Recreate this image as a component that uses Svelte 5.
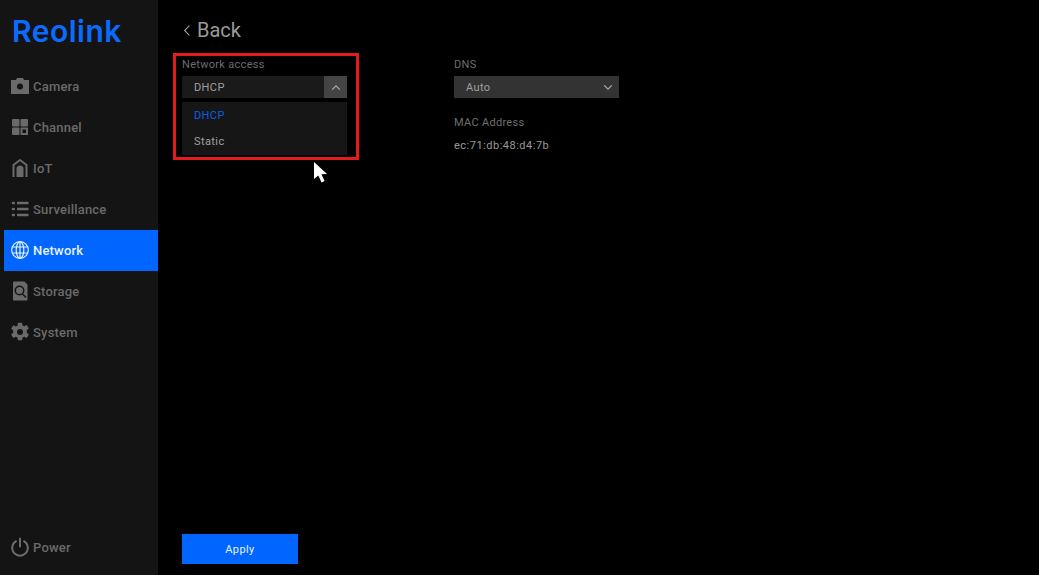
<script>
  const items = [
    { id: "camera", label: "Camera" },
    { id: "channel", label: "Channel" },
    { id: "iot", label: "IoT" },
    { id: "surveillance", label: "Surveillance" },
    { id: "network", label: "Network" },
    { id: "storage", label: "Storage" },
    { id: "system", label: "System" }
  ];
  const active = "network";
</script>

{#snippet icon(id)}
  <svg class="icon" viewBox="0 0 20 20" width="20" height="20">
    {#if id === "camera"}
      <path fill="currentColor" fill-rule="evenodd" d="M1 4h5l1-2h6l1 2h5v14H1zM10 7.500a3 3 0 1 0 0 6 3 3 0 0 0 0-6z" />
    {:else if id === "channel"}
      <rect x="2" y="2" width="7.500" height="7.500" rx="1" fill="currentColor" />
      <rect x="10.500" y="2" width="7.500" height="7.500" rx="1" fill="currentColor" />
      <rect x="2" y="10.500" width="7.500" height="7.500" rx="1" fill="currentColor" />
      <rect x="11.500" y="11.500" width="5.500" height="5.500" fill="none" stroke="currentColor" stroke-width="2" />
    {:else if id === "iot"}
      <path fill="none" stroke="currentColor" stroke-width="2" stroke-linejoin="round" d="M3.500 19V7L10 2l6.500 5v12" />
      <path fill="currentColor" d="M6.500 19v-8a3.500 3.500 0 0 1 7 0v8z" />
    {:else if id === "surveillance"}
      <path fill="none" stroke="currentColor" stroke-width="2.600" d="M7 4h11.500M7 10h11.500M7 16h11.500" />
      <path fill="none" stroke="currentColor" stroke-width="2.600" stroke-linecap="round" d="M3 4h.8M3 10h.8M3 16h.8" />
    {:else if id === "network"}
      <circle cx="10" cy="10" r="8.300" fill="none" stroke="currentColor" stroke-width="1.200" />
      <ellipse cx="10" cy="10" rx="3.800" ry="8.300" fill="none" stroke="currentColor" stroke-width="1.200" />
      <path fill="none" stroke="currentColor" stroke-width="1.200" d="M10 1.700v16.600M2.200 7h15.600M2.200 13h15.600" />
    {:else if id === "storage"}
      <path fill="currentColor" fill-rule="evenodd" d="M4 .5h10.500l3 3V18.500a1 1 0 0 1-1 1H4a1 1 0 0 1-1-1V1.500a1 1 0 0 1 1-1zM9.500 4.500a5 5 0 1 0 0 10 5 5 0 0 0 0-10zM9.500 6a3.500 3.500 0 1 1 0 7 3.500 3.500 0 0 1 0-7z" />
      <path fill="none" stroke="#141414" stroke-width="1.400" d="M12.500 13l3.500 3.500" />
    {:else if id === "system"}
      <path fill="currentColor" fill-rule="evenodd" d="M8 .8h4l.6 2.700 1.700.8 2.500-1.200 2 3.400-2 1.800v2.400l2 1.800-2 3.400-2.500-1.200-1.700.8-.6 2.700H8l-.6-2.700-1.700-.8-2.500 1.200-2-3.400 2-1.800V8.500l-2-1.800 2-3.400 2.500 1.200 1.700-.8zM10 7a3 3 0 1 0 0 6 3 3 0 0 0 0-6z" />
    {:else if id === "power"}
      <path fill="none" stroke="currentColor" stroke-width="2" stroke-linecap="round" d="M6 4.200a7.800 7.800 0 1 0 8 0M10 1.500v8" />
    {/if}
  </svg>
{/snippet}

<div class="page">
  <aside class="sidebar">
    <div class="logo">Reolink</div>
    <nav>
      {#each items as item}
        <div class="item" class:active={item.id === active}>
          {@render icon(item.id)}
          <span>{item.label}</span>
        </div>
      {/each}
    </nav>
    <div class="item power">
      {@render icon("power")}
      <span>Power</span>
    </div>
  </aside>

  <main>
    <div class="back">
      <svg viewBox="0 0 10 16" width="8" height="13"><path d="M8 2L2 8l6 6" fill="none" stroke="currentColor" stroke-width="1.400" /></svg>
      <span>Back</span>
    </div>

    <div class="columns">
      <div class="col access">
        <div class="label">Network access</div>
        <div class="select">
          <span class="value">DHCP</span>
          <span class="toggle">
            <svg viewBox="0 0 12 8" width="10" height="7"><path d="M1.500 6.500L6 2l4.500 4.500" fill="none" stroke="currentColor" stroke-width="1.500" /></svg>
          </span>
        </div>
        <ul class="menu">
          <li class="selected">DHCP</li>
          <li>Static</li>
        </ul>
        <div class="highlight"></div>
      </div>

      <div class="col dns">
        <div class="label">DNS</div>
        <div class="select light">
          <span class="value">Auto</span>
          <svg class="chev" viewBox="0 0 12 8" width="10" height="7"><path d="M1.500 1.500L6 6l4.500-4.500" fill="none" stroke="currentColor" stroke-width="1.500" /></svg>
        </div>
        <div class="label mac">MAC Address</div>
        <div class="mac-value">ec:71:db:48:d4:7b</div>
      </div>
    </div>

    <button class="apply">Apply</button>

    <svg class="cursor" viewBox="0 0 16 24" width="16" height="24">
      <path d="M1 1v17l4.300-3.600 3.300 7.100 3-1.400-3.200-6.800 5.600-.4z" fill="#fff" />
    </svg>
  </main>
</div>

<style>
  :global(body) {
    background: #000;
  }
  .page {
    display: flex;
    width: 1039px;
    height: 575px;
    overflow: hidden;
    background: #000;
    font-family: Roboto, "Liberation Sans", sans-serif;
  }
  .sidebar {
    display: flex;
    flex-direction: column;
    flex: none;
    width: 158px;
    background: #141414;
  }
  .logo {
    height: 66px;
    padding: 14px 0 0 12px;
    box-sizing: border-box;
    color: #0a6cff;
    font-family: Inter, sans-serif;
    font-size: 30px;
    line-height: 34px;
    font-weight: 600;
    letter-spacing: 0.5px;
  }
  .item {
    display: flex;
    align-items: center;
    gap: 3px;
    height: 41px;
    box-sizing: border-box;
    margin-left: 4px;
    padding: 0 0 1px 6px;
    color: #6a6a6a;
    font-size: 13px;
    font-weight: 500;
    letter-spacing: 0.2px;
  }
  .item.active {
    background: #0066ff;
    color: #e8f1ff;
  }
  .icon {
    flex: none;
  }
  .power {
    margin-top: auto;
    margin-bottom: 7px;
  }
  main {
    position: relative;
    flex: 1;
    padding: 0 0 11px 24px;
    display: flex;
    flex-direction: column;
    align-items: flex-start;
  }
  .back {
    display: flex;
    align-items: center;
    gap: 6px;
    height: 60px;
    margin-bottom: -3px;
    color: #9a9a9a;
    font-size: 20px;
    padding-left: 1px;
    box-sizing: border-box;
  }
  .columns {
    display: flex;
    flex: 1;
  }
  .col {
    position: relative;
    width: 165px;
  }
  .access {
    margin-right: 107px;
  }
  .label {
    height: 19px;
    color: #6e6e6e;
    font-size: 11px;
    line-height: 16px;
    letter-spacing: 0.3px;
  }
  .select {
    display: flex;
    align-items: center;
    justify-content: space-between;
    height: 22px;
    background: #1a1a1a;
    color: #a0a0a0;
    font-size: 11px;
    letter-spacing: 0.4px;
  }
  .select.light {
    background: #333;
  }
  .value {
    padding-left: 12px;
  }
  .toggle {
    display: flex;
    align-items: center;
    justify-content: center;
    width: 23px;
    height: 22px;
    background: #444;
    color: #aaa;
  }
  .chev {
    margin-right: 6px;
    color: #aaa;
  }
  .menu {
    position: absolute;
    top: 45px;
    left: 0;
    right: 0;
    margin: 0;
    padding: 1px 0 0;
    box-sizing: border-box;
    height: 53px;
    list-style: none;
    background: #161616;
    color: #a0a0a0;
    font-size: 11px;
    letter-spacing: 0.4px;
  }
  .menu li {
    height: 26px;
    line-height: 26px;
    padding-left: 12px;
  }
  .menu .selected {
    color: #0a5fe8;
  }
  .highlight {
    position: absolute;
    top: -4px;
    left: -9px;
    width: 186px;
    height: 107px;
    box-sizing: border-box;
    border: 3px solid #e41a1c;
  }
  .mac {
    margin-top: 17px;
    height: 23px;
  }
  .mac-value {
    color: #999;
    font-size: 11px;
    line-height: 16px;
    letter-spacing: 0.5px;
  }
  .apply {
    width: 116px;
    height: 30px;
    border: 0;
    padding: 0;
    background: #0066ff;
    color: #e8f1ff;
    font: 400 11px Roboto, sans-serif;
    letter-spacing: 0.4px;
  }
  .cursor {
    position: absolute;
    left: 155px;
    top: 161px;
  }
</style>
